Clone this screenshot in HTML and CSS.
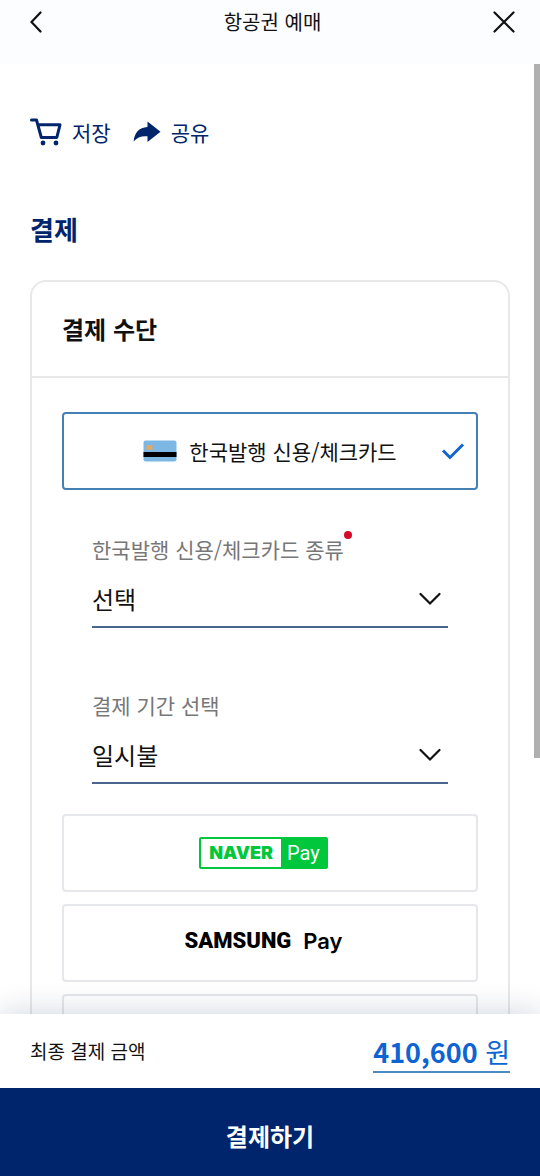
FILE: index.html
```html
<!DOCTYPE html>
<html lang="ko">
<head>
    <meta charset="UTF-8">
    <meta name="viewport" content="width=device-width, initial-scale=1.0">
    <title>항공권 예매</title>
    <link rel="stylesheet" href="styles.css">
</head>
<body>
    <header class="top-bar">
        <button type="button" class="icon-button" aria-label="뒤로">
            <svg width="12" height="22" viewBox="0 0 12 22"><path d="M10.500 1.500L1.500 11l9 9.500"/></svg>
        </button>
        <h1>항공권 예매</h1>
        <button type="button" class="icon-button" aria-label="닫기">
            <svg width="22" height="22" viewBox="0 0 22 22"><path d="M1.500 1.500l19 19M20.500 1.500l-19 19"/></svg>
        </button>
    </header>

    <div class="content">
        <main class="scroll-area">
            <!-- 저장 / 공유 -->
            <div class="actions">
                <button type="button" class="action">
                    <svg width="32" height="28" viewBox="0 0 32 28">
                        <path d="M1.500 2h5l4.800 17.500h15.500L30 6.800H8.500" fill="none" stroke="currentColor" stroke-width="3" stroke-linejoin="round" stroke-linecap="round"/>
                        <circle cx="13" cy="25" r="2.400" fill="currentColor"/>
                        <circle cx="26" cy="25" r="2.400" fill="currentColor"/>
                    </svg>
                    저장
                </button>
                <button type="button" class="action">
                    <svg width="28" height="22" viewBox="0 0 28 22">
                        <path d="M14.500 0.500L27.500 10.800 14.500 21V15.300C8.500 14.800 4 16.200 0.700 20.500 1 12.500 6 6.300 14.500 6z" fill="currentColor"/>
                    </svg>
                    공유
                </button>
            </div>

            <h2>결제</h2>

            <section class="card">
                <h3>결제 수단</h3>
                <div class="card-body">
                    <label class="option selected">
                        <input type="radio" name="method" checked>
                        <svg width="34" height="22" viewBox="0 0 34 22">
                            <rect x="0.500" y="0.500" width="33" height="21" rx="2" fill="#7db7e4"/>
                            <rect x="3.500" y="5" width="6" height="5" rx="1" fill="#e3a867"/>
                            <rect x="0.500" y="12" width="33" height="5" fill="#000"/>
                        </svg>
                        <span>한국발행 신용/체크카드</span>
                        <svg class="check" width="24" height="18" viewBox="0 0 24 18"><path d="M2 8.500l7 7L22 2.500"/></svg>
                    </label>

                    <div class="fields">
                        <div class="field">
                            <label for="cardType">한국발행 신용/체크카드 종류<i class="required"></i></label>
                            <div class="select-box">
                                <select id="cardType"><option>선택</option></select>
                                <svg width="22" height="14" viewBox="0 0 22 14"><path d="M1.500 2l9.500 9.500L20.500 2"/></svg>
                            </div>
                        </div>
                        <div class="field">
                            <label for="period">결제 기간 선택</label>
                            <div class="select-box">
                                <select id="period"><option>일시불</option></select>
                                <svg width="22" height="14" viewBox="0 0 22 14"><path d="M1.500 2l9.500 9.500L20.500 2"/></svg>
                            </div>
                        </div>
                    </div>

                    <label class="option brand">
                        <input type="radio" name="method">
                        <span class="naver"><b>NAVER</b><span>Pay</span></span>
                    </label>
                    <label class="option brand">
                        <input type="radio" name="method">
                        <span class="samsung"><b>SAMSUNG</b><span>Pay</span></span>
                    </label>
                    <div class="option"></div>
                </div>
            </section>
        </main>
        <div class="scroll-thumb"></div>
    </div>

    <footer class="pay-bar">
        <div class="total">
            <span>최종 결제 금액</span>
            <a href="#"><b>410,600</b> 원</a>
        </div>
        <button type="button" class="pay-button">결제하기</button>
    </footer>
</body>
</html>
```

FILE: styles.css
```css
* {
    box-sizing: border-box;
}

body {
    margin: 0;
    height: 100vh;
    display: flex;
    flex-direction: column;
    font-family: "Noto Sans CJK KR", sans-serif;
    font-size: 21px;
    line-height: 30px;
    color: #111;
    background-color: #fff;
}

button,
select {
    font: inherit;
    color: inherit;
    background: none;
    border: none;
    border-radius: 0;
    padding: 0;
    cursor: pointer;
}

h1,
h2,
h3 {
    margin: 0;
}

svg {
    display: block;
    flex-shrink: 0;
}

/* 상단 바 */
.top-bar {
    display: flex;
    justify-content: space-between;
    align-items: center;
    padding: 0 25px 20px 30px;
    height: 64px;
    flex-shrink: 0;
    background-color: #fcfdff;
}

.top-bar h1 {
    font-size: 20px;
    font-weight: 400;
}

.icon-button {
    width: 22px;
}

.icon-button path {
    fill: none;
    stroke: #111;
    stroke-width: 2.2;
    stroke-linecap: round;
}

.content {
    position: relative;
    flex: 1;
    min-height: 0;
}

.scroll-area {
    height: 100%;
    overflow-y: auto;
    scrollbar-width: none;
    padding: 52px 30px 30px;
}

.scroll-thumb {
    position: absolute;
    top: 0;
    right: 0;
    width: 6px;
    height: 73%;
    background-color: #b0b0b0;
}

.actions {
    display: flex;
    gap: 22px;
    height: 32px;
}

.action {
    display: flex;
    align-items: center;
    gap: 10px;
    color: #00256c;
}

h2 {
    margin: 60px 0 30px;
    font-size: 26px;
    line-height: 42px;
    color: #00256c;
}

/* 결제 수단 카드 */
.card {
    border: 2px solid #e8e8e8;
    border-radius: 16px;
}

.card h3 {
    padding: 32px 30px;
    font-size: 24px;
    border-bottom: 2px solid #e8e8e8;
}

.card-body {
    display: flex;
    flex-direction: column;
    gap: 12px;
    padding: 34px 30px;
}

.option {
    position: relative;
    display: flex;
    justify-content: center;
    align-items: center;
    gap: 12px;
    height: 78px;
    border: 2px solid #e6e7ea;
    border-radius: 4px;
    cursor: pointer;
}

.option input {
    position: absolute;
    opacity: 0;
}

.option.selected {
    border-color: #4580b4;
}

.option.brand {
    padding-right: 13px;
}

.check {
    position: absolute;
    right: 11px;
}

.check path {
    fill: none;
    stroke: #1265cf;
    stroke-width: 3;
}

.fields {
    display: flex;
    flex-direction: column;
    gap: 62px;
    padding: 32px 30px 18px;
}

.field label {
    position: relative;
    display: inline-block;
    color: #777;
}

.required {
    position: absolute;
    top: -3px;
    right: -8px;
    width: 8px;
    height: 8px;
    border-radius: 50%;
    background-color: #d60b28;
}

.select-box {
    display: flex;
    align-items: center;
    margin-top: 8px;
    height: 56px;
    border-bottom: 2px solid #4a6590;
}

.select-box select {
    flex: 1;
    height: 100%;
    margin-right: -30px;
    appearance: none;
    font-size: 24px;
}

.select-box svg {
    margin-right: 7px;
    pointer-events: none;
}

.select-box path {
    fill: none;
    stroke: #111;
    stroke-width: 2.2;
    stroke-linecap: round;
}

.naver {
    display: flex;
    height: 32px;
    line-height: 28px;
    border: 2px solid #00c73c;
    border-radius: 2px;
}

.naver b {
    padding: 0 8px;
    font-family: Inter, sans-serif;
    font-size: 18px;
    font-weight: 900;
    color: #00c73c;
}

.naver span {
    padding: 0 6px;
    font-family: Roboto, sans-serif;
    font-size: 20px;
    color: #fff;
    background-color: #00c73c;
}

.samsung {
    display: flex;
    gap: 12px;
    padding-bottom: 4px;
    font-size: 22px;
    color: #000;
}

.samsung b {
    font-family: Roboto, sans-serif;
    font-weight: 900;
}

.samsung span {
    font-family: Inter, sans-serif;
    font-weight: 600;
}

/* 하단 결제 영역 */
.pay-bar {
    position: relative;
    flex-shrink: 0;
    background-color: #fff;
    box-shadow: 0 0 30px rgba(0, 37, 80, 0.2);
}

.total {
    display: flex;
    justify-content: space-between;
    align-items: center;
    height: 74px;
    padding: 0 30px;
    font-size: 19px;
}

.total a {
    margin-top: 4px;
    font-size: 27px;
    line-height: 38px;
    color: #0e64d2;
    text-decoration: none;
    border-bottom: 2px solid #4a8bc4;
}

.pay-button {
    width: 100%;
    height: 88px;
    padding-top: 8px;
    font-size: 24px;
    font-weight: 700;
    color: #fff;
    background-color: #00256c;
}
```
